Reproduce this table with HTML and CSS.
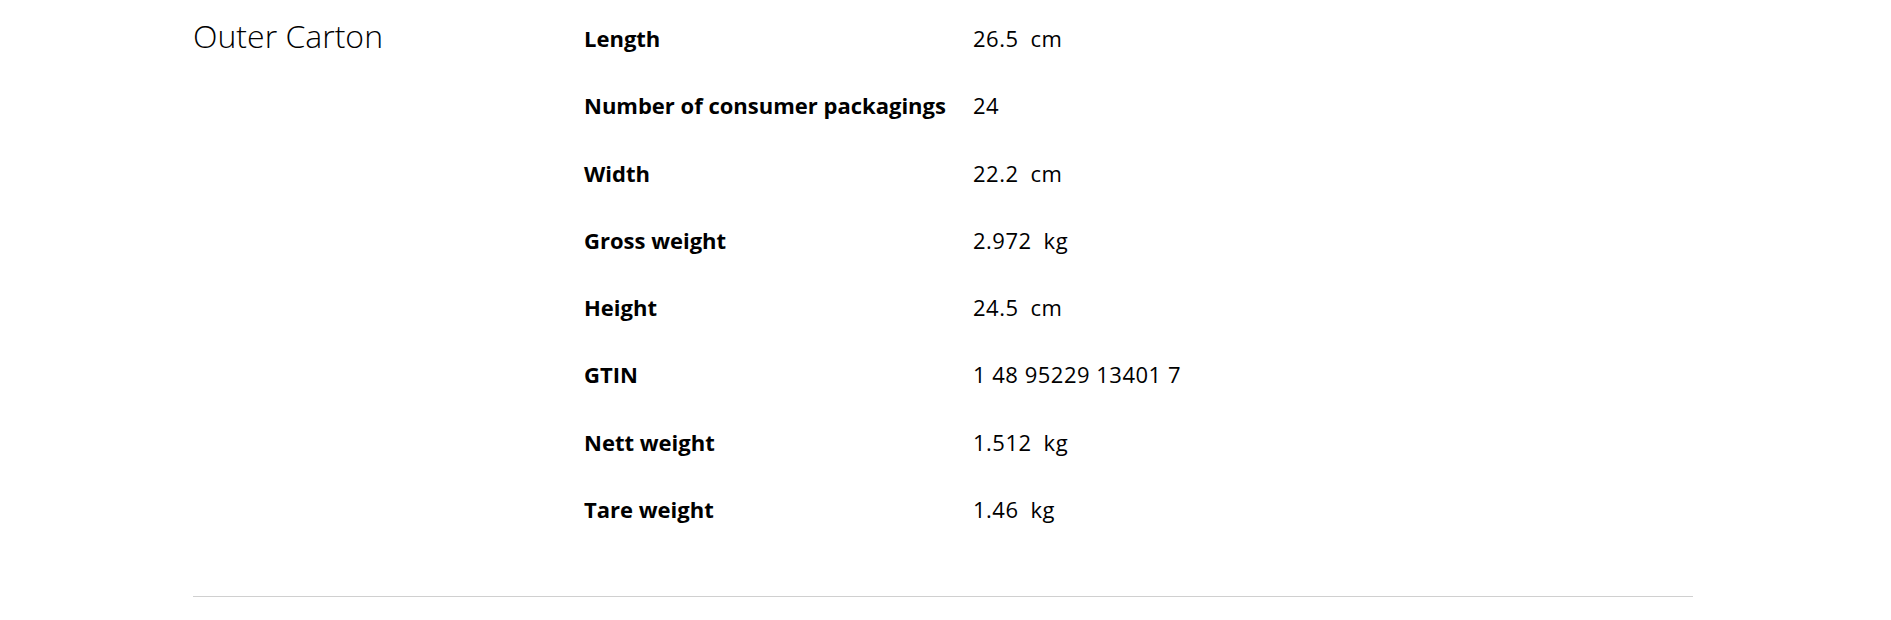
FILE: index.html
```html
<!DOCTYPE html>
<html lang="en">
<head>
<meta charset="utf-8">
<title>Outer Carton</title>
<link rel="stylesheet" href="styles.css">
</head>
<body>
<div class="page">
  <section class="spec">
    <h2 class="spec-title">Outer Carton</h2>
    <dl class="spec-list">
      <div class="spec-row"><dt>Length</dt><dd>26.5<span class="unit">cm</span></dd></div>
      <div class="spec-row"><dt>Number of consumer packagings</dt><dd>24</dd></div>
      <div class="spec-row"><dt>Width</dt><dd>22.2<span class="unit">cm</span></dd></div>
      <div class="spec-row"><dt>Gross weight</dt><dd>2.972<span class="unit">kg</span></dd></div>
      <div class="spec-row"><dt>Height</dt><dd>24.5<span class="unit">cm</span></dd></div>
      <div class="spec-row"><dt>GTIN</dt><dd>1 48 95229 13401 7</dd></div>
      <div class="spec-row"><dt>Nett weight</dt><dd>1.512<span class="unit">kg</span></dd></div>
      <div class="spec-row"><dt>Tare weight</dt><dd>1.46<span class="unit">kg</span></dd></div>
    </dl>
  </section>
</div>
</body>
</html>
```

FILE: styles.css
```css
html, body {
  margin: 0;
  padding: 0;
  background: #ffffff;
}

body {
  font-family: "Open Sans", "Noto Sans", sans-serif;
  color: #000000;
}

.page {
  padding: 0 198px 0 193px;
}

.spec {
  display: grid;
  grid-template-columns: 391px 1fr;
  padding-top: 15px;
  padding-bottom: 43px;
  border-bottom: 1px solid #d0d0d0;
}

.spec-title {
  margin: 0;
  font-size: 32px;
  font-weight: 300;
  line-height: 42px;
  letter-spacing: 0;
}

.spec-list {
  margin: 0;
  display: flex;
  flex-direction: column;
}

.spec-row {
  display: grid;
  grid-template-columns: 389px 1fr;
  height: 67.3px;
  align-items: start;
}

.spec-row dt {
  margin: 0;
  font-size: 22px;
  font-weight: 700;
  line-height: 46px;
  letter-spacing: 0;
}

.spec-row dd {
  margin: 0;
  font-size: 22px;
  font-weight: 400;
  line-height: 46px;
  letter-spacing: 0.5px;
}

.unit {
  margin-left: 12px;
}
```
